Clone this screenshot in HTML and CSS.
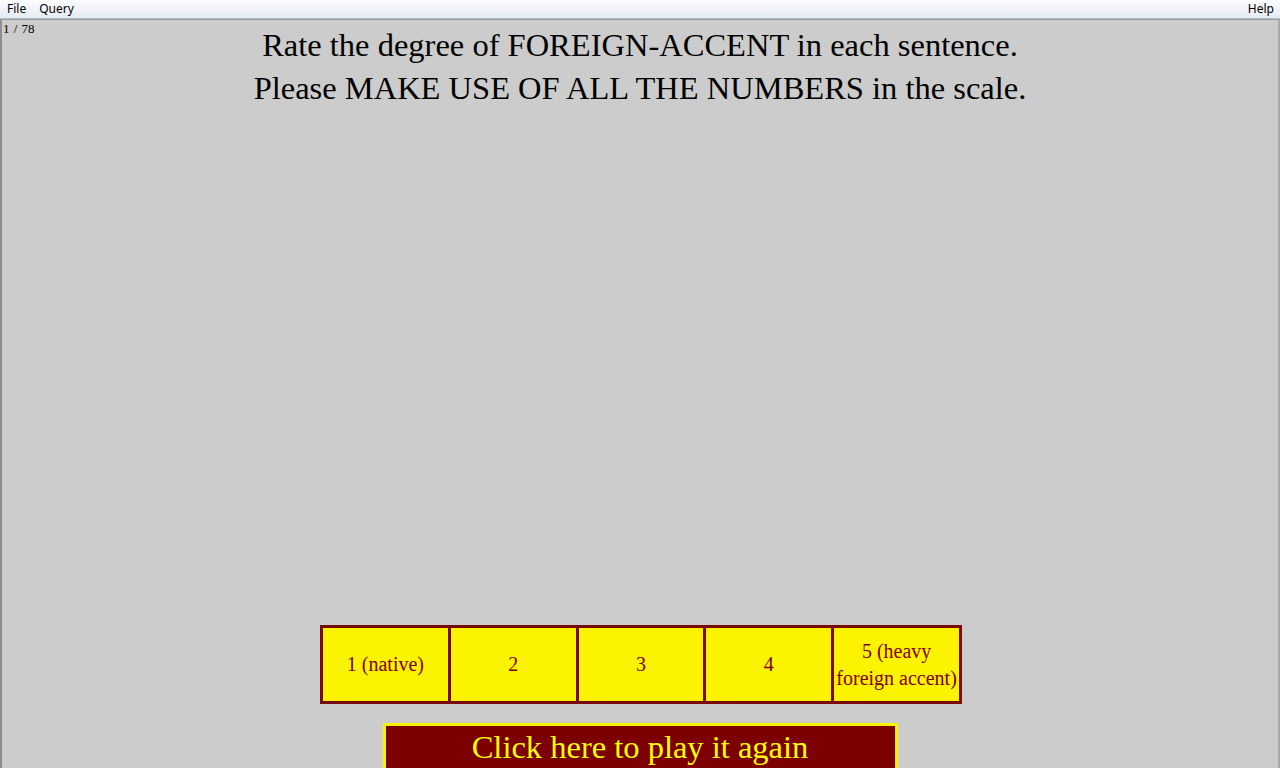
FILE: index.html
```html
<!DOCTYPE html>
<html>
<head>
<meta charset="utf-8">
<title>Rating</title>
<link rel="stylesheet" href="styles.css">
</head>
<body>
<div class="menubar">
  <div class="menu-left">
    <span class="menu-item">File</span>
    <span class="menu-item">Query</span>
  </div>
  <span class="menu-item">Help</span>
</div>
<div class="stage">
  <div class="header">
    <div class="counter">1 / 78</div>
    <div class="title">
      <div>Rate the degree of FOREIGN-ACCENT in each sentence.</div>
      <div>Please MAKE USE OF ALL THE NUMBERS in the scale.</div>
    </div>
    <div></div>
  </div>
  <div class="scale">
    <div class="cell">1 (native)</div>
    <div class="cell">2</div>
    <div class="cell">3</div>
    <div class="cell">4</div>
    <div class="cell">5 (heavy foreign accent)</div>
  </div>
  <div class="replay">Click here to play it again</div>
</div>
</body>
</html>
```

FILE: styles.css
```css
html, body {
  margin: 0;
  padding: 0;
  width: 1280px;
  height: 768px;
  overflow: hidden;
  background: #cccccc;
}

.menubar {
  height: 19px;
  box-sizing: border-box;
  display: flex;
  justify-content: space-between;
  align-items: center;
  padding: 0 6px 1px 7px;
  background: linear-gradient(#fdfdfe, #e4eaf4);
  border-bottom: 1px solid #b9bfca;
  font-family: "Noto Sans", "Liberation Sans", sans-serif;
  font-size: 12px;
  color: #000;
}

.menu-left {
  display: flex;
  gap: 13px;
}

.stage {
  height: 749px;
  box-sizing: border-box;
  border-left: 2px solid #8e8e8e;
  border-right: 2px solid #a8a8a8;
  border-top: 1px solid #9a9a9a;
  background: #cccccc;
  display: flex;
  flex-direction: column;
  align-items: center;
  overflow: hidden;
}

.header {
  width: 100%;
  display: grid;
  grid-template-columns: 1fr auto 1fr;
}

.counter {
  font-family: "Liberation Serif", serif;
  font-size: 13px;
  line-height: 14px;
  padding: 2px 0 0 1px;
  color: #000;
  word-spacing: 1px;
}

.title {
  margin-top: 4px;
  font-family: "Liberation Serif", serif;
  font-size: 32.5px;
  line-height: 43px;
  text-align: center;
  color: #000;
  white-space: nowrap;
}

.scale {
  margin-top: 515px;
  margin-left: 2px;
  width: 642px;
  height: 79px;
  box-sizing: border-box;
  display: grid;
  grid-template-columns: repeat(5, 1fr);
  gap: 3px;
  border: 3px solid #7a0a0a;
  background: #7a0a0a;
  flex-shrink: 0;
}

.cell {
  background: #fbf300;
  color: #800000;
  font-family: "Liberation Serif", serif;
  font-size: 20px;
  line-height: 27px;
  display: flex;
  align-items: center;
  justify-content: center;
  text-align: center;
}

.replay {
  margin-top: 19px;
  width: 515px;
  height: 50px;
  box-sizing: border-box;
  flex-shrink: 0;
  border: 3px solid #fff200;
  background: #7c0000;
  color: #ffff00;
  font-family: "Liberation Serif", serif;
  font-size: 32.5px;
  line-height: 42px;
  text-align: center;
}
```
